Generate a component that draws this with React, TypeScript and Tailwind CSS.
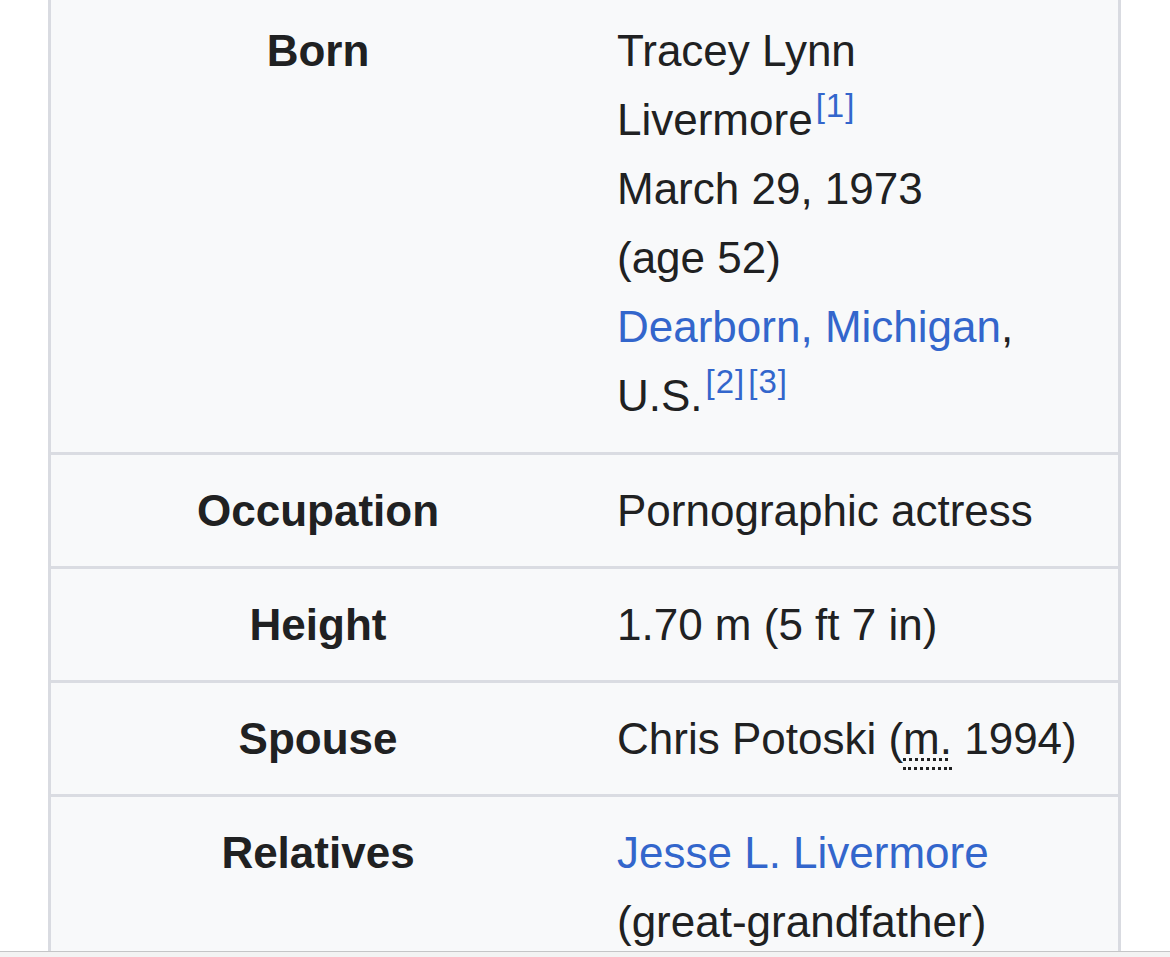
const LINK = 'text-[#3366cc]'

function Ref({ n }: { n: number }) {
  return (
    <span className={`relative -top-[18px] ml-[3px] text-[33px] leading-none tracking-[1px] ${LINK}`}>[{n}]</span>
  )
}

type Row = { label: string; value: React.ReactNode; first?: boolean }

const ROWS: Row[] = [
  {
    label: 'Born',
    first: true,
    value: (
      <>
        <span className="block">Tracey Lynn</span>
        <span className="block">
          Livermore
          <Ref n={1} />
        </span>
        <span className="block">March 29, 1973</span>
        <span className="block">(age 52)</span>
        <span className="block">
          <span className={LINK}>Dearborn, Michigan</span>,
        </span>
        <span className="block">
          U.S.
          <Ref n={2} />
          <Ref n={3} />
        </span>
      </>
    ),
  },
  { label: 'Occupation', value: 'Pornographic actress' },
  { label: 'Height', value: '1.70 m (5 ft 7 in)' },
  {
    label: 'Spouse',
    value: (
      <>
        Chris Potoski (
        <span className="border-b-[3px] border-dotted border-[#202122] pb-[4px] underline decoration-dotted decoration-[3px] underline-offset-[4px]">
          m.
        </span>{' '}
        1994)
      </>
    ),
  },
  {
    label: 'Relatives',
    value: (
      <>
        <span className={`block ${LINK}`}>Jesse L. Livermore</span>
        <span className="block">(great-grandfather)</span>
      </>
    ),
  },
]

export default function App() {
  return (
    <div
      className="flex h-[957px] w-[1170px] flex-col overflow-hidden bg-white text-[#202122]"
      style={{ fontFamily: '"Liberation Sans", Arial, sans-serif' }}
    >
      <div className="flex-1 overflow-hidden">
        <div className="ml-[48px] w-[1073px] border-x-[3px] border-[#d9dbe1] bg-[#f8f9fa] text-[44px] leading-[69px]">
          {ROWS.map((row) => (
            <div
              key={row.label}
              className={`grid grid-cols-[534px_1fr] ${
                row.first ? 'pt-[16px] pb-[22px]' : 'border-t-[3px] border-[#dadce2] py-[21px]'
              }`}
            >
              <div className="text-center font-bold">{row.label}</div>
              <div className="pl-[32px] pr-[30px]">{row.value}</div>
            </div>
          ))}
        </div>
      </div>
      <div className="h-px bg-[#c5c5c7]" />
      <div className="h-[5px] bg-[#f3f3f3]" />
    </div>
  )
}
